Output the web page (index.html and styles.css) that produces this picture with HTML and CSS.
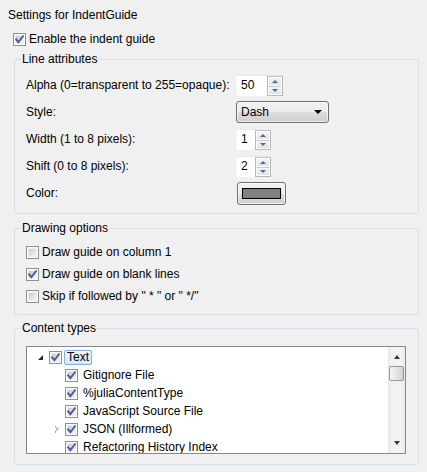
FILE: index.html
```html
<!DOCTYPE html>
<html>
<head>
<meta charset="utf-8">
<link rel="stylesheet" href="styles.css">
</head>
<body>
<svg width="0" height="0" class="defs">
  <defs>
    <symbol id="tick" viewBox="0 0 13 13">
      <path d="M3.2 6.4 L5.4 9.2 L9.9 3.3" fill="none" stroke="#4a5e91" stroke-width="2" stroke-linecap="square" stroke-linejoin="miter"/>
    </symbol>
  </defs>
</svg>
<div class="page">
  <div class="title">Settings for IndentGuide</div>
  <div class="check enable"><span class="cb"><svg class="tk"><use href="#tick"/></svg></span><span>Enable the indent guide</span></div>

  <fieldset class="group line">
    <legend>Line attributes</legend>
    <div class="grid">
      <span class="lbl">Alpha (0=transparent to 255=opaque):</span>
      <div class="spin w47"><span class="val">50</span><span class="btns"><span class="sb"><i class="au"></i></span><span class="sb"><i class="ad"></i></span></span></div>

      <span class="lbl">Style:</span>
      <div class="combo"><span>Dash</span><i class="carr"></i></div>

      <span class="lbl">Width (1 to 8 pixels):</span>
      <div class="spin w35"><span class="val">1</span><span class="btns"><span class="sb"><i class="au"></i></span><span class="sb"><i class="ad"></i></span></span></div>

      <span class="lbl">Shift (0 to 8 pixels):</span>
      <div class="spin w35"><span class="val">2</span><span class="btns"><span class="sb"><i class="au"></i></span><span class="sb"><i class="ad"></i></span></span></div>

      <span class="lbl">Color:</span>
      <div class="colorbtn"><span class="swatch"></span></div>
    </div>
  </fieldset>

  <fieldset class="group drawing">
    <legend>Drawing options</legend>
    <div class="opts">
      <div class="check"><span class="cb"></span><span>Draw guide on column 1</span></div>
      <div class="check"><span class="cb"><svg class="tk"><use href="#tick"/></svg></span><span>Draw guide on blank lines</span></div>
      <div class="check"><span class="cb"></span><span>Skip if followed by " * " or " */"</span></div>
    </div>
  </fieldset>

  <fieldset class="group content">
    <legend>Content types</legend>
    <div class="tree">
      <div class="rows">
        <div class="row l0"><span class="exp"><i class="tri-open"></i></span><span class="cb"><svg class="tk"><use href="#tick"/></svg></span><span class="tl sel">Text</span></div>
        <div class="row l1"><span class="exp"></span><span class="cb"><svg class="tk"><use href="#tick"/></svg></span><span class="tl">Gitignore File</span></div>
        <div class="row l1"><span class="exp"></span><span class="cb"><svg class="tk"><use href="#tick"/></svg></span><span class="tl">%juliaContentType</span></div>
        <div class="row l1"><span class="exp"></span><span class="cb"><svg class="tk"><use href="#tick"/></svg></span><span class="tl">JavaScript Source File</span></div>
        <div class="row l1"><span class="exp"><i class="tri-closed"></i></span><span class="cb"><svg class="tk"><use href="#tick"/></svg></span><span class="tl">JSON (Illformed)</span></div>
        <div class="row l1"><span class="exp"></span><span class="cb"><svg class="tk"><use href="#tick"/></svg></span><span class="tl">Refactoring History Index</span></div>
      </div>
      <div class="vscroll">
        <span class="sarrow"><i class="sup"></i></span>
        <span class="thumb"></span>
        <span class="strack"></span>
        <span class="sarrow"><i class="sdn"></i></span>
      </div>
    </div>
  </fieldset>
</div>
</body>
</html>
```
FILE: styles.css
```css
html, body {
  margin: 0;
  padding: 0;
}
body {
  background: #f0f0f0;
  font-family: "Liberation Sans", Arial, sans-serif;
  font-size: 12px;
  color: #000;
  width: 427px;
  height: 472px;
  overflow: hidden;
}
.defs {
  position: absolute;
  width: 0;
  height: 0;
}
.page {
  display: flex;
  flex-direction: column;
  align-items: flex-start;
}
.title {
  margin: 7px 0 0 8px;
  line-height: 16px;
  height: 16px;
}
.check {
  display: flex;
  align-items: center;
  gap: 3px;
  line-height: 15px;
}
.enable {
  margin: 9px 0 0 13px;
}
.cb {
  position: relative;
  flex: none;
  width: 13px;
  height: 13px;
  box-sizing: border-box;
  border: 1px solid #8e8f8f;
  background: #fdfdfd;
}
.cb::before {
  content: "";
  position: absolute;
  left: 1px;
  top: 1px;
  right: 1px;
  bottom: 1px;
  background: linear-gradient(135deg, #c4c8ce 0%, #dfe1e4 50%, #f4f4f4 100%);
  border: 1px solid #eeeeee;
  box-sizing: border-box;
}
.tk {
  position: absolute;
  left: -1px;
  top: -1px;
  width: 13px;
  height: 13px;
}
.group {
  margin: 0 0 0 14px;
  padding: 0;
  width: 405px;
  box-sizing: border-box;
  border: 1px solid #d5dfe5;
  border-radius: 3px;
  min-width: 0;
}
.group legend {
  margin-left: 6px;
  padding: 0 1px;
  line-height: 16px;
  height: 16px;
}
.line {
  margin-top: 4px;
}
.grid {
  display: grid;
  grid-template-columns: 210px auto;
  grid-auto-rows: 22px;
  row-gap: 5px;
  padding: 7px 0 9px 11px;
  align-items: center;
  justify-items: start;
}
.grid .lbl {
  line-height: 16px;
}
.spin {
  display: flex;
  height: 21px;
  box-sizing: border-box;
  background: #fff;
  border-top: 1px solid #e2e8ee;
  border-left: 1px solid #f6f6f6;
}
.w47 { width: 47px; }
.w35 { width: 35px; }
.val {
  flex: 1;
  padding-left: 4px;
  line-height: 19px;
}
.btns {
  width: 16px;
  display: flex;
  flex-direction: column;
  box-sizing: border-box;
  border: 1px solid #b8b8b8;
  border-top-color: #c4c4c4;
  background: #fff;
}
.sb {
  flex: 1;
  display: flex;
  align-items: center;
  justify-content: center;
  background: linear-gradient(#f4f4f4, #e2e2e2);
  border: 1px solid #fff;
  box-sizing: border-box;
}
.sb + .sb {
  border-top: 1px solid #c9c9c9;
}
.au, .ad {
  width: 0;
  height: 0;
  border-left: 3px solid transparent;
  border-right: 3px solid transparent;
}
.au { border-bottom: 3px solid #4d6a9b; }
.ad { border-top: 3px solid #4d6a9b; }
.combo {
  width: 93px;
  height: 22px;
  box-sizing: border-box;
  border: 1px solid #707070;
  border-radius: 3px;
  background: linear-gradient(#f2f2f2 0%, #ebebeb 50%, #dddddd 51%, #cfcfcf 100%);
  box-shadow: inset 0 0 0 1px rgba(255,255,255,0.6);
  display: flex;
  align-items: center;
  justify-content: space-between;
  padding: 0 6px 0 4px;
  line-height: 16px;
}
.carr {
  width: 0;
  height: 0;
  border-left: 4px solid transparent;
  border-right: 4px solid transparent;
  border-top: 4px solid #000;
}
.colorbtn {
  margin-left: 1px;
  width: 49px;
  height: 23px;
  box-sizing: border-box;
  border: 1px solid #707070;
  border-radius: 3px;
  background: linear-gradient(#f2f2f2 0%, #ebebeb 50%, #dddddd 51%, #cfcfcf 100%);
  box-shadow: inset 0 0 0 1px rgba(255,255,255,0.7);
  display: flex;
  align-items: center;
  justify-content: center;
}
.swatch {
  width: 39px;
  height: 11px;
  box-sizing: border-box;
  border: 1px solid #000;
  background: #808080;
}
.drawing {
  margin-top: 6px;
}
.opts {
  display: flex;
  flex-direction: column;
  padding: 5px 0 7px 11px;
}
.opts .check {
  height: 22px;
}
.content {
  margin-top: 5px;
}
.tree {
  margin: 10px 0 10px 11px;
  width: 380px;
  height: 108px;
  box-sizing: border-box;
  border: 1px solid #828790;
  background: #fff;
  display: flex;
  overflow: hidden;
}
.rows {
  flex: 1;
  padding-top: 1px;
  overflow: hidden;
}
.row {
  height: 18px;
  display: flex;
  align-items: center;
}
.l0 { padding-left: 6px; }
.l1 { padding-left: 22px; }
.exp {
  width: 16px;
  flex: none;
  display: flex;
  align-items: center;
  justify-content: center;
}
.tri-open {
  width: 0;
  height: 0;
  border-left: 5px solid transparent;
  border-bottom: 5px solid #262626;
  margin-left: -2px;
}
.tri-closed {
  width: 4px;
  height: 7px;
  position: relative;
  margin-left: -1px;
  border-left: 1px solid #a6a6a6;
  box-sizing: border-box;
}
.tri-closed::before {
  content: "";
  position: absolute;
  left: -1px;
  top: 0;
  width: 0;
  height: 0;
  border-top: 3.5px solid transparent;
  border-bottom: 3.5px solid transparent;
  border-left: 4px solid #a6a6a6;
}
.tri-closed::after {
  content: "";
  position: absolute;
  left: -1px;
  top: 1.2px;
  width: 0;
  height: 0;
  border-top: 2.3px solid transparent;
  border-bottom: 2.3px solid transparent;
  border-left: 2.6px solid #fff;
}
.tl {
  margin-left: 2px;
  padding: 0 2px;
  height: 15px;
  line-height: 13px;
  box-sizing: border-box;
  border: 1px solid transparent;
  white-space: nowrap;
}
.tl.sel {
  border-color: #84acdd;
  border-radius: 2px;
  background: linear-gradient(#f2f7fe, #d4e6fc);
}
.vscroll {
  width: 17px;
  flex: none;
  display: flex;
  flex-direction: column;
  background: linear-gradient(90deg, #e6e6e6 0%, #f2f2f2 20%, #f2f2f2 80%, #e9e9e9 100%);
}
.sarrow {
  height: 17px;
  flex: none;
  display: flex;
  align-items: center;
  justify-content: center;
}
.sup, .sdn {
  width: 0;
  height: 0;
  border-left: 3.5px solid transparent;
  border-right: 3.5px solid transparent;
}
.sup { border-bottom: 4px solid #3c3c3c; margin-top: 3px; }
.sdn { border-top: 4px solid #3c3c3c; margin-bottom: 3px; }
.thumb {
  margin: 2px 1px 0 1px;
  height: 15px;
  flex: none;
  box-sizing: border-box;
  border: 1px solid #979797;
  border-radius: 2px;
  background: linear-gradient(90deg, #f4f4f4 0%, #e4e4e4 50%, #d2d2d2 100%);
}
.strack {
  flex: 1;
}
```
